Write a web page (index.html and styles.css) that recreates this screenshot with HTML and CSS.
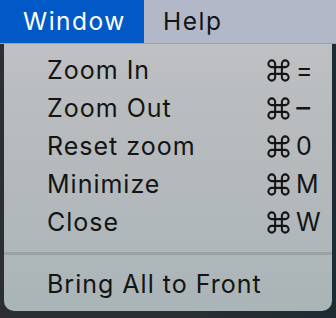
FILE: index.html
```html
<!DOCTYPE html>
<html>
<head>
<meta charset="utf-8">
<link rel="stylesheet" href="styles.css">
</head>
<body>
<div class="menubar">
  <div class="bar-item active">Window</div>
  <div class="bar-item">Help</div>
</div>
<div class="menu">
  <div class="row"><span class="label">Zoom In</span><span class="key"><svg class="cmd" viewBox="0 0 24 24"><path d="M15 6v12a3 3 0 1 0 3-3H6a3 3 0 1 0 3 3V6a3 3 0 1 0-3 3h12a3 3 0 1 0-3-3"/></svg><span>=</span></span></div>
  <div class="row"><span class="label">Zoom Out</span><span class="key"><svg class="cmd" viewBox="0 0 24 24"><path d="M15 6v12a3 3 0 1 0 3-3H6a3 3 0 1 0 3 3V6a3 3 0 1 0-3 3h12a3 3 0 1 0-3-3"/></svg><span class="minus">−</span></span></div>
  <div class="row"><span class="label">Reset zoom</span><span class="key"><svg class="cmd" viewBox="0 0 24 24"><path d="M15 6v12a3 3 0 1 0 3-3H6a3 3 0 1 0 3 3V6a3 3 0 1 0-3 3h12a3 3 0 1 0-3-3"/></svg><span>0</span></span></div>
  <div class="row"><span class="label">Minimize</span><span class="key"><svg class="cmd" viewBox="0 0 24 24"><path d="M15 6v12a3 3 0 1 0 3-3H6a3 3 0 1 0 3 3V6a3 3 0 1 0-3 3h12a3 3 0 1 0-3-3"/></svg><span>M</span></span></div>
  <div class="row"><span class="label">Close</span><span class="key"><svg class="cmd" viewBox="0 0 24 24"><path d="M15 6v12a3 3 0 1 0 3-3H6a3 3 0 1 0 3 3V6a3 3 0 1 0-3 3h12a3 3 0 1 0-3-3"/></svg><span>W</span></span></div>
  <div class="sep"></div>
  <div class="row"><span class="label">Bring All to Front</span></div>
</div>
</body>
</html>
```
FILE: styles.css
```css
html, body {
  margin: 0;
  padding: 0;
}
body {
  width: 336px;
  height: 318px;
  overflow: hidden;
  background: linear-gradient(90deg, #2c2f32 0%, #2c2f32 50%, #1d2b33 100%);
  font-family: "Inter", "Noto Sans", sans-serif;
  color: #141414;
}
.menubar {
  display: flex;
  height: 43px;
  background: #b2b8c7;
  border-bottom: 1px solid #9aa1ad;
}
.bar-item {
  font-size: 24.5px;
  line-height: 43px;
  letter-spacing: 1.5px;
}
.bar-item.active {
  background: #0059c7;
  color: #ffffff;
  width: 121px;
  padding-left: 23px;
}
.bar-item + .bar-item {
  padding-left: 19px;
}
.menu {
  margin: 0 4px;
  height: 260px;
  padding-top: 7px;
  border-radius: 0 0 10px 10px;
  background: linear-gradient(180deg, #bec0c3 0%, #b4b9bc 50%, #aab5b8 100%);
}
.row {
  display: flex;
  height: 38px;
  line-height: 38px;
  font-size: 25px;
  letter-spacing: 1px;
  padding-left: 43px;
}
.label {
  flex: 1;
}
.key {
  width: 67px;
  display: flex;
  align-items: center;
}
.cmd {
  width: 27px;
  height: 27px;
  margin-right: 4px;
  fill: none;
  stroke: #141414;
  stroke-width: 1.8;
  stroke-linecap: round;
  stroke-linejoin: round;
}
.minus {
  font-family: "DejaVu Sans", sans-serif;
  font-weight: bold;
  font-size: 22px;
  letter-spacing: 0;
  margin-left: -2px;
}
.sep {
  height: 3px;
  margin: 11px 0 10px;
  background: #9aa2a5;
}
```
